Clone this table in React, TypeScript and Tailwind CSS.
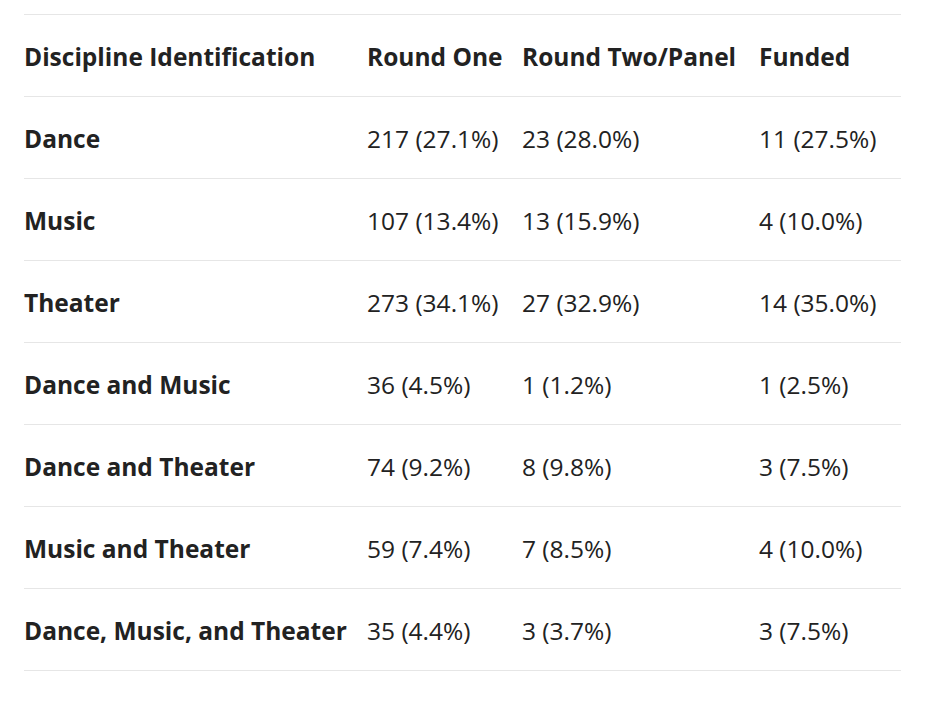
const rows = [
  ["Dance", "217 (27.1%)", "23 (28.0%)", "11 (27.5%)"],
  ["Music", "107 (13.4%)", "13 (15.9%)", "4 (10.0%)"],
  ["Theater", "273 (34.1%)", "27 (32.9%)", "14 (35.0%)"],
  ["Dance and Music", "36 (4.5%)", "1 (1.2%)", "1 (2.5%)"],
  ["Dance and Theater", "74 (9.2%)", "8 (9.8%)", "3 (7.5%)"],
  ["Music and Theater", "59 (7.4%)", "7 (8.5%)", "4 (10.0%)"],
  ["Dance, Music, and Theater", "35 (4.4%)", "3 (3.7%)", "3 (7.5%)"],
];

const cols = "grid grid-cols-[343px_155px_237px_1fr] items-center h-[82px] pt-[3px] border-b border-[#e6e6e6]";

export default function App() {
  return (
    <div className="min-h-[702px] bg-white pt-[14px] pl-6 pr-[31px] text-[#222] font-['Open_Sans',sans-serif] whitespace-nowrap">
      <div className="border-t border-[#e6e6e6]">
        <div className={cols + " font-bold text-[24.5px]"}>
          <div>Discipline Identification</div>
          <div>Round One</div>
          <div>Round Two/Panel</div>
          <div>Funded</div>
        </div>
        {rows.map((r) => (
          <div key={r[0]} className={cols + " text-[24.5px]"}>
            <div className="font-bold">{r[0]}</div>
            <div>{r[1]}</div>
            <div>{r[2]}</div>
            <div>{r[3]}</div>
          </div>
        ))}
      </div>
    </div>
  );
}
